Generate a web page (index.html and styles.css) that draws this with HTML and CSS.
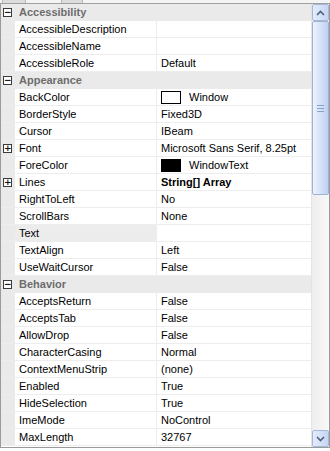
FILE: index.html
```html
<!DOCTYPE html>
<html>
<head>
<meta charset="utf-8">
<link rel="stylesheet" href="styles.css">
</head>
<body>
<div class="frame">
  <div class="topstrip"><span class="tb tb1"></span><span class="tb tb2"></span></div>
  <div class="body">
    <div class="rows">
      <div class="cat"><span class="gl"><span class="box">&#8722;</span></span><span class="ct">Accessibility</span></div>
      <div class="row"><span class="gl"></span><span class="nm">AccessibleDescription</span><span class="vl"></span></div>
      <div class="row"><span class="gl"></span><span class="nm">AccessibleName</span><span class="vl"></span></div>
      <div class="row"><span class="gl"></span><span class="nm">AccessibleRole</span><span class="vl">Default</span></div>
      <div class="cat"><span class="gl"><span class="box">&#8722;</span></span><span class="ct">Appearance</span></div>
      <div class="row"><span class="gl"></span><span class="nm">BackColor</span><span class="vl"><span class="sw sw-white"></span>Window</span></div>
      <div class="row"><span class="gl"></span><span class="nm">BorderStyle</span><span class="vl">Fixed3D</span></div>
      <div class="row"><span class="gl"></span><span class="nm">Cursor</span><span class="vl">IBeam</span></div>
      <div class="row"><span class="gl"><span class="box">+</span></span><span class="nm">Font</span><span class="vl">Microsoft Sans Serif, 8.25pt</span></div>
      <div class="row"><span class="gl"></span><span class="nm">ForeColor</span><span class="vl"><span class="sw sw-black"></span>WindowText</span></div>
      <div class="row"><span class="gl"><span class="box">+</span></span><span class="nm">Lines</span><span class="vl bold">String[] Array</span></div>
      <div class="row"><span class="gl"></span><span class="nm">RightToLeft</span><span class="vl">No</span></div>
      <div class="row"><span class="gl"></span><span class="nm">ScrollBars</span><span class="vl">None</span></div>
      <div class="row sel"><span class="gl"></span><span class="nm">Text</span><span class="vl"></span></div>
      <div class="row"><span class="gl"></span><span class="nm">TextAlign</span><span class="vl">Left</span></div>
      <div class="row"><span class="gl"></span><span class="nm">UseWaitCursor</span><span class="vl">False</span></div>
      <div class="cat"><span class="gl"><span class="box">&#8722;</span></span><span class="ct">Behavior</span></div>
      <div class="row"><span class="gl"></span><span class="nm">AcceptsReturn</span><span class="vl">False</span></div>
      <div class="row"><span class="gl"></span><span class="nm">AcceptsTab</span><span class="vl">False</span></div>
      <div class="row"><span class="gl"></span><span class="nm">AllowDrop</span><span class="vl">False</span></div>
      <div class="row"><span class="gl"></span><span class="nm">CharacterCasing</span><span class="vl">Normal</span></div>
      <div class="row"><span class="gl"></span><span class="nm">ContextMenuStrip</span><span class="vl">(none)</span></div>
      <div class="row"><span class="gl"></span><span class="nm">Enabled</span><span class="vl">True</span></div>
      <div class="row"><span class="gl"></span><span class="nm">HideSelection</span><span class="vl">True</span></div>
      <div class="row"><span class="gl"></span><span class="nm">ImeMode</span><span class="vl">NoControl</span></div>
      <div class="row"><span class="gl"></span><span class="nm">MaxLength</span><span class="vl">32767</span></div>
    </div>
    <div class="scroll">
      <div class="sbtn">
        <svg width="9" height="6" viewBox="0 0 9 6"><path d="M1 5 L4.5 1.5 L8 5" fill="none" stroke="#4d6185" stroke-width="1.6"/></svg>
      </div>
      <div class="thumb"><span class="grip"></span></div>
      <div class="track"></div>
      <div class="sbtn">
        <svg width="9" height="6" viewBox="0 0 9 6"><path d="M1 1 L4.5 4.5 L8 1" fill="none" stroke="#4d6185" stroke-width="1.6"/></svg>
      </div>
    </div>
  </div>
  <div class="bottom"></div>
</div>
</body>
</html>
```
FILE: styles.css
```css
html, body {
  margin: 0;
  padding: 0;
  background: #ece9d8;
}
body {
  width: 330px;
  height: 451px;
  overflow: hidden;
  font-family: "Liberation Sans", Arial, sans-serif;
  font-size: 11px;
  color: #000;
}
.frame {
  width: 330px;
  height: 451px;
  display: flex;
  flex-direction: column;
  background: #f0f0f0;
}
.topstrip {
  box-sizing: border-box;
  height: 4px;
  background: #f4f4f4;
  border-bottom: 1px solid #a0a0a0;
  display: flex;
}
.tb {
  display: block;
  height: 3px;
  background: #dcdcdc;
  border-left: 1px solid #b8b8b8;
  border-right: 1px solid #b8b8b8;
}
.tb1 { width: 22px; margin-left: 2px; }
.tb2 { width: 20px; margin-left: 35px; }
.body {
  display: flex;
  height: 443px;
  border-left: 1px solid #9a9a9a;
  border-right: 1px solid #9a9a9a;
  background: #fff;
}
.rows {
  flex: 1;
  display: flex;
  flex-direction: column;
  overflow: hidden;
}
.row, .cat {
  display: grid;
  grid-template-columns: 14px 142px 1fr;
  height: 17px;
  flex: 0 0 17px;
  box-sizing: border-box;
  border-bottom: 1px solid #ededed;
  line-height: 17px;
  white-space: nowrap;
}
.cat {
  background: #eaeaea;
  border-bottom: 1px solid #eaeaea;
  grid-template-columns: 14px 1fr;
}
.gl {
  background: #eaeaea;
  position: relative;
}
.box {
  position: absolute;
  left: 2px;
  top: 4px;
  width: 7px;
  height: 7px;
  border: 1px solid #3b3b3b;
  background: #fff;
  font-size: 9px;
  line-height: 7px;
  text-align: center;
  font-family: "DejaVu Sans", sans-serif;
  font-weight: bold;
  color: #111;
  overflow: hidden;
}
.ct {
  font-weight: bold;
  color: #6d6d6d;
  padding-left: 4px;
}
.nm {
  padding-left: 4px;
  border-right: 1px solid #ededed;
  overflow: hidden;
}
.vl {
  padding-left: 4px;
  display: flex;
  align-items: center;
  overflow: hidden;
}
.bold { font-weight: bold; }
.sel .nm { background: #ececec; }
.sw {
  display: inline-block;
  width: 18px;
  height: 11px;
  border: 1px solid #000;
  margin-right: 8px;
  box-sizing: content-box;
}
.sw-white { background: #fff; }
.sw-black { background: #000; }
.scroll {
  width: 17px;
  display: flex;
  flex-direction: column;
  background: #f3f3f3;
  border-left: 1px solid #e4e4e4;
}
.sbtn {
  height: 17px;
  box-sizing: border-box;
  border: 1px solid #a6b8d8;
  border-radius: 2px;
  background: linear-gradient(to right, #e4ecfa, #c6d6f4);
  display: flex;
  align-items: center;
  justify-content: center;
}
.thumb {
  height: 174px;
  box-sizing: border-box;
  border: 1px solid #9fb2d5;
  border-radius: 2px;
  background: linear-gradient(to right, #eef3fd, #cbdcf7 70%, #bed0f1);
  display: flex;
  align-items: center;
  justify-content: center;
}
.grip {
  width: 7px;
  height: 5px;
  border-top: 1px solid #8aa0c8;
  border-bottom: 1px solid #8aa0c8;
  position: relative;
}
.grip::after {
  content: "";
  position: absolute;
  left: 0;
  right: 0;
  top: 2px;
  border-top: 1px solid #8aa0c8;
}
.track {
  flex: 1;
  background: linear-gradient(to right, #eeeeee, #f8f8f8);
}
.bottom {
  flex: 1;
  background: #ffffff;
  border-top: 1px solid #9a9a9a;
}
```
